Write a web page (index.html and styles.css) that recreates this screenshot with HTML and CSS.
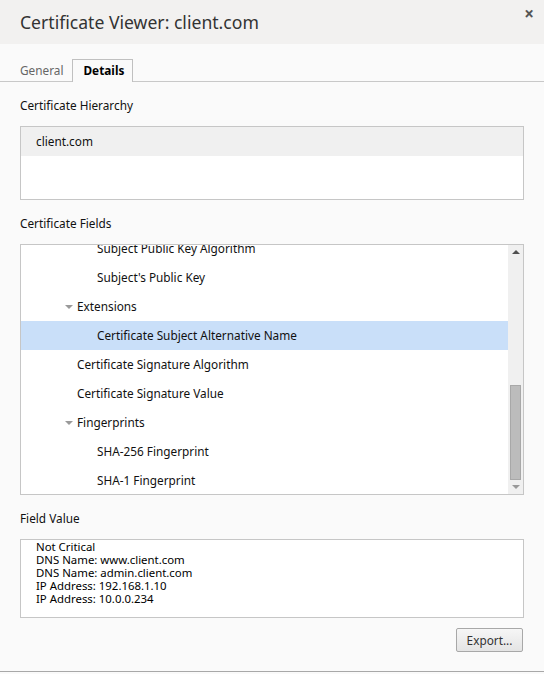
FILE: index.html
```html
<!DOCTYPE html>
<html>
<head>
<meta charset="utf-8">
<link rel="stylesheet" href="styles.css">
</head>
<body>
<div class="dialog">
  <div class="titlebar">
    <div class="title">Certificate Viewer: client.com</div>
    <div class="close">×</div>
  </div>
  <div class="tabs">
    <div class="tab">General</div>
    <div class="tab active">Details</div>
  </div>
  <div class="content">
    <div class="label">Certificate Hierarchy</div>
    <div class="hierarchy">
      <div class="hrow">client.com</div>
    </div>
    <div class="label">Certificate Fields</div>
    <div class="fields">
      <div class="tree">
        <div class="list">
          <div class="row l2">Subject Public Key Algorithm</div>
          <div class="row l2">Subject's Public Key</div>
          <div class="row l1"><span class="tri"></span>Extensions</div>
          <div class="row l2 selected">Certificate Subject Alternative Name</div>
          <div class="row l1">Certificate Signature Algorithm</div>
          <div class="row l1">Certificate Signature Value</div>
          <div class="row l1"><span class="tri"></span>Fingerprints</div>
          <div class="row l2">SHA-256 Fingerprint</div>
          <div class="row l2">SHA-1 Fingerprint</div>
        </div>
      </div>
      <div class="scrollbar">
        <div class="arrow up"></div>
        <div class="track"><div class="thumb"></div></div>
        <div class="arrow down"></div>
      </div>
    </div>
    <div class="label">Field Value</div>
    <div class="value">Not Critical<br>DNS Name: www.client.com<br>DNS Name: admin.client.com<br>IP Address: 192.168.1.10<br>IP Address: 10.0.0.234</div>
    <div class="actions">
      <button class="btn">Export...</button>
    </div>
  </div>
</div>
</body>
</html>
```

FILE: styles.css
```css
html, body {
  margin: 0;
  padding: 0;
}
body {
  width: 544px;
  height: 674px;
  background: #fafafa;
  font-family: "Noto Sans", "DejaVu Sans", sans-serif;
  color: #111;
  overflow: hidden;
}
.dialog {
  height: 671px;
  border-bottom: 1px solid #a8a8a8;
  background: #fafafa;
}
.titlebar {
  height: 44px;
  background: #f2f1f0;
  display: flex;
  justify-content: space-between;
  align-items: flex-start;
}
.title {
  padding-left: 20px;
  padding-top: 10px;
  font-size: 17.6px;
  line-height: 24px;
  color: #333;
}
.close {
  padding-right: 10px;
  padding-top: 4px;
  font-size: 17px;
  line-height: 20px;
  color: #555;
  font-weight: bold;
}
.tabs {
  margin-top: 15px;
  height: 22px;
  border-bottom: 1px solid #c8c8c8;
  display: flex;
  align-items: flex-end;
  padding-left: 14px;
}
.tab {
  font-size: 11.8px;
  line-height: 21px;
  height: 21px;
  padding: 0 6px;
  color: #666;
}
.tab.active {
  border: 1px solid #c0c0c0;
  border-bottom: none;
  background: #fafafa;
  color: #000;
  font-weight: bold;
  padding: 0 8px 1px 10px;
  margin-bottom: -1px;
  margin-left: 3px;
}
.content {
  padding: 0 20px;
}
.label {
  font-size: 11.8px;
  line-height: 16px;
  color: #111;
  margin-top: 15px;
  margin-bottom: 13px;
}
.hierarchy {
  height: 72px;
  background: #fff;
  border: 1px solid #c6c6c6;
}
.hrow {
  height: 29px;
  background: #f0f0f0;
  font-size: 11.8px;
  line-height: 29px;
  padding-left: 15px;
}
.fields {
  height: 249px;
  border: 1px solid #c6c6c6;
  background: #fff;
  display: flex;
}
.tree {
  flex: 1;
  overflow: hidden;
}
.list {
  margin-top: -11px;
}
.row {
  height: 29px;
  line-height: 29px;
  font-size: 11.8px;
  color: #111;
  white-space: nowrap;
  display: flex;
  align-items: center;
}
.row.l1 { padding-left: 56px; }
.row.l2 { padding-left: 76px; }
.row.selected { background: #c9dff9; }
.tri {
  width: 0;
  height: 0;
  border-left: 4px solid transparent;
  border-right: 4px solid transparent;
  border-top: 4px solid #9a9a9a;
  margin-left: -12px;
  margin-right: 4px;
}
.scrollbar {
  width: 15px;
  background: #f0f0f0;
  display: flex;
  flex-direction: column;
}
.arrow {
  height: 14px;
  display: flex;
  justify-content: center;
  align-items: center;
}
.arrow::after {
  content: "";
  width: 0;
  height: 0;
  border-left: 4px solid transparent;
  border-right: 4px solid transparent;
}
.arrow.up::after { border-bottom: 4px solid #505050; }
.arrow.down::after { border-top: 4px solid #999; }
.track {
  flex: 1;
  display: flex;
  flex-direction: column;
  justify-content: flex-end;
  padding: 0 2px;
}
.thumb {
  height: 93px;
  background: #bcbcbc;
  border: 1px solid #a8a8a8;
}
.value {
  height: 77px;
  margin-top: 1px;
  border: 1px solid #c6c6c6;
  background: #fff;
  font-size: 11.4px;
  line-height: 13px;
  padding-left: 15px;
  color: #000;
}
.actions {
  display: flex;
  justify-content: flex-end;
  margin-top: 10px;
  padding-right: 1px;
}
.btn {
  width: 67px;
  height: 24px;
  font-family: "Noto Sans", "DejaVu Sans", sans-serif;
  font-size: 11.8px;
  color: #333;
  background: linear-gradient(#f6f6f6, #e4e4e4);
  border: 1px solid #a8a8a8;
  border-radius: 2px;
  padding: 0;
}
```
